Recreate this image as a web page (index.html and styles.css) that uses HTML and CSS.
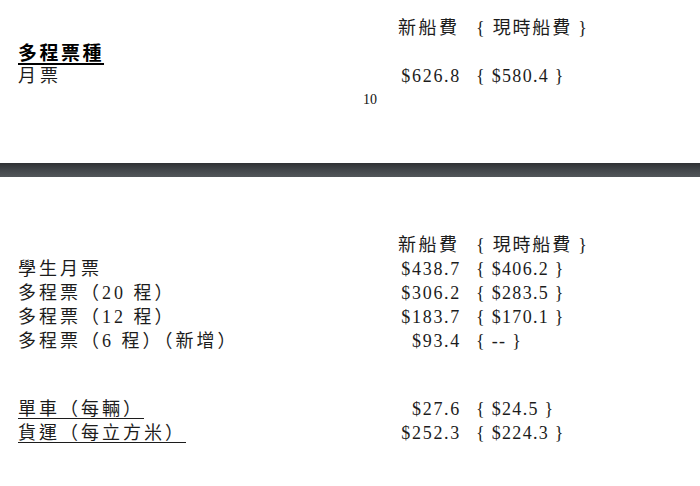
FILE: index.html
```html
<!DOCTYPE html>
<html>
<head>
<meta charset="utf-8">
<link rel="stylesheet" href="styles.css">
</head>
<body>
<div class="page page-one">
  <div class="row">
    <span class="label"></span>
    <span class="head-new">新船費</span>
    <span class="head-cur">{ 現時船費 }</span>
  </div>
  <div class="row">
    <span class="label heading">多程票種</span>
  </div>
  <div class="row">
    <span class="label wide">月票</span>
    <span class="price">$626.8</span>
    <span class="cur">{ $580.4 }</span>
  </div>
  <div class="pagenum">10</div>
</div>
<div class="bar"></div>
<div class="page page-two">
  <div class="row">
    <span class="label"></span>
    <span class="head-new">新船費</span>
    <span class="head-cur">{ 現時船費 }</span>
  </div>
  <div class="row">
    <span class="label">學生月票</span>
    <span class="price">$438.7</span>
    <span class="cur">{ $406.2 }</span>
  </div>
  <div class="row">
    <span class="label">多程票（20 程）</span>
    <span class="price">$306.2</span>
    <span class="cur">{ $283.5 }</span>
  </div>
  <div class="row">
    <span class="label">多程票（12 程）</span>
    <span class="price">$183.7</span>
    <span class="cur">{ $170.1 }</span>
  </div>
  <div class="row">
    <span class="label">多程票（6 程）（新增）</span>
    <span class="price">$93.4</span>
    <span class="cur">{ -- }</span>
  </div>
  <div class="group">
    <div class="row">
      <span class="label"><span class="ul">單車（每輛）</span></span>
      <span class="price">$27.6</span>
      <span class="cur">{ $24.5 }</span>
    </div>
    <div class="row">
      <span class="label"><span class="ul">貨運（每立方米）</span></span>
      <span class="price">$252.3</span>
      <span class="cur">{ $224.3 }</span>
    </div>
  </div>
</div>
</body>
</html>
```
FILE: styles.css
```css
html, body {
  margin: 0;
  padding: 0;
  background: #ffffff;
}
body {
  width: 700px;
  font-family: "Liberation Serif", "Noto Sans CJK TC", serif;
  color: #1c1c1c;
  font-size: 18px;
}
.page-one {
  height: 147px;
  padding-top: 16px;
}
.page-two {
  padding-top: 56px;
}
.row {
  display: grid;
  grid-template-columns: 380px 62px auto;
  column-gap: 0;
  padding-left: 18px;
  height: 24px;
  line-height: 24px;
  white-space: nowrap;
  letter-spacing: 1.5px;
}
.label {
  grid-column: 1;
  letter-spacing: 3px;
}
.label.wide {
  letter-spacing: 4px;
}
.heading {
  font-family: "Noto Sans CJK TC", sans-serif;
  font-weight: 700;
  font-size: 19px;
  letter-spacing: 2.5px;
  text-decoration: underline;
  text-decoration-thickness: 2px;
  text-underline-offset: 3px;
  color: #000;
}
.head-new {
  grid-column: 2;
  letter-spacing: 2.5px;
}
.head-cur {
  grid-column: 3;
  padding-left: 16px;
  letter-spacing: 1.8px;
}
.price {
  grid-column: 2;
  text-align: right;
  letter-spacing: 1.7px;
  margin-right: -1px;
}
.cur {
  grid-column: 3;
  padding-left: 16px;
  letter-spacing: 1.3px;
}
.pagenum {
  font-size: 14px;
  line-height: 24px;
  height: 24px;
  padding-left: 363px;
  color: #111;
}
.bar {
  height: 14px;
  background: linear-gradient(to bottom, #2f3134 0%, #43474b 50%, #52565a 100%);
}
.group {
  margin-top: 44px;
}
.ul {
  text-decoration: underline;
  text-decoration-thickness: 1px;
  text-underline-offset: 3px;
  padding-right: 6px;
}
```
